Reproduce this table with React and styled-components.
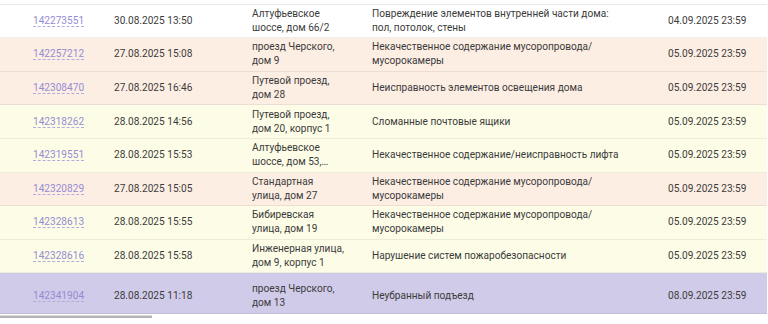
import React from "react";
import styled, { createGlobalStyle } from "styled-components";

const GlobalStyle = createGlobalStyle`
  html, body { margin: 0; padding: 0; background: #ffffff; }
  body { font-family: Roboto, "Noto Sans", Arial, sans-serif; }
`;

const BG = {
  white: "#ffffff",
  peach: "#fdeee4",
  yellow: "#fdfde7",
  purple: "#d1cbea",
};

const Page = styled.div`
  width: 767px;
  height: 324px;
  overflow: hidden;
  display: flex;
  flex-direction: column;
`;

const RowStub = styled.div`
  height: 3.6px;
  flex: none;
  background: #ffffff;
  border-bottom: 1px solid #e9e9e9;
`;

const Row = styled.div`
  flex: none;
  box-sizing: border-box;
  height: ${(p) => (p.$selected ? "40.4px" : "33.6px")};
  padding-top: ${(p) => (p.$selected ? "6px" : "0")};
  display: grid;
  grid-template-columns: 114px 138px 120px 296px 1fr;
  align-items: center;
  background: ${(p) => BG[p.$tone]};
  border-bottom: 1px solid rgba(0, 0, 0, 0.065);
  font-size: 10.1px;
  line-height: 14px;
  color: #3b3b3b;
`;

const IdCell = styled.div`
  padding-left: 33px;
`;

const IdLink = styled.a`
  color: #958cd3;
  text-decoration: none;
  border-bottom: 1px dashed #b3acdf;
  cursor: pointer;
`;

const Cell = styled.div`
  min-width: 0;
`;

const Address = styled.div`
  max-width: 93px;
  display: -webkit-box;
  -webkit-line-clamp: 2;
  -webkit-box-orient: vertical;
  overflow: hidden;
`;

const Description = styled.div`
  max-width: 254px;
`;

const ScrollTrack = styled.div`
  flex: none;
  padding-top: 1px;
`;

const ScrollThumb = styled.div`
  width: 152px;
  height: 2px;
  background: #b4b4b4;
  border-top: 1px solid #dcdcdc;
`;

const rows = [
  {
    id: "142273551",
    created: "30.08.2025 13:50",
    address: "Алтуфьевское шоссе, дом 66/2",
    text: "Повреждение элементов внутренней части дома: пол, потолок, стены",
    deadline: "04.09.2025 23:59",
    tone: "white",
  },
  {
    id: "142257212",
    created: "27.08.2025 15:08",
    address: "проезд Черского, дом 9",
    text: "Некачественное содержание мусоропровода/\u200Bмусорокамеры",
    deadline: "05.09.2025 23:59",
    tone: "peach",
  },
  {
    id: "142308470",
    created: "27.08.2025 16:46",
    address: "Путевой проезд, дом 28",
    text: "Неисправность элементов освещения дома",
    deadline: "05.09.2025 23:59",
    tone: "peach",
  },
  {
    id: "142318262",
    created: "28.08.2025 14:56",
    address: "Путевой проезд, дом 20, корпус 1",
    text: "Сломанные почтовые ящики",
    deadline: "05.09.2025 23:59",
    tone: "yellow",
  },
  {
    id: "142319551",
    created: "28.08.2025 15:53",
    address: "Алтуфьевское шоссе, дом 53, корпус 1",
    text: "Некачественное содержание/неисправность лифта",
    deadline: "05.09.2025 23:59",
    tone: "yellow",
  },
  {
    id: "142320829",
    created: "27.08.2025 15:05",
    address: "Стандартная улица, дом 27",
    text: "Некачественное содержание мусоропровода/\u200Bмусорокамеры",
    deadline: "05.09.2025 23:59",
    tone: "peach",
  },
  {
    id: "142328613",
    created: "28.08.2025 15:55",
    address: "Бибиревская улица, дом 19",
    text: "Некачественное содержание мусоропровода/\u200Bмусорокамеры",
    deadline: "05.09.2025 23:59",
    tone: "yellow",
  },
  {
    id: "142328616",
    created: "28.08.2025 15:58",
    address: "Инженерная улица, дом 9, корпус 1",
    text: "Нарушение систем пожаробезопасности",
    deadline: "05.09.2025 23:59",
    tone: "yellow",
  },
  {
    id: "142341904",
    created: "28.08.2025 11:18",
    address: "проезд Черского, дом 13",
    text: "Неубранный подъезд",
    deadline: "08.09.2025 23:59",
    tone: "purple",
    selected: true,
  },
];

export default function App() {
  return (
    <>
      <GlobalStyle />
      <Page>
        <RowStub />
        {rows.map((r) => (
          <Row key={r.id} $tone={r.tone} $selected={r.selected}>
            <IdCell>
              <IdLink>{r.id}</IdLink>
            </IdCell>
            <Cell>{r.created}</Cell>
            <Cell>
              <Address>{r.address}</Address>
            </Cell>
            <Cell>
              <Description>{r.text}</Description>
            </Cell>
            <Cell>{r.deadline}</Cell>
          </Row>
        ))}
        <ScrollTrack>
          <ScrollThumb />
        </ScrollTrack>
      </Page>
    </>
  );
}
